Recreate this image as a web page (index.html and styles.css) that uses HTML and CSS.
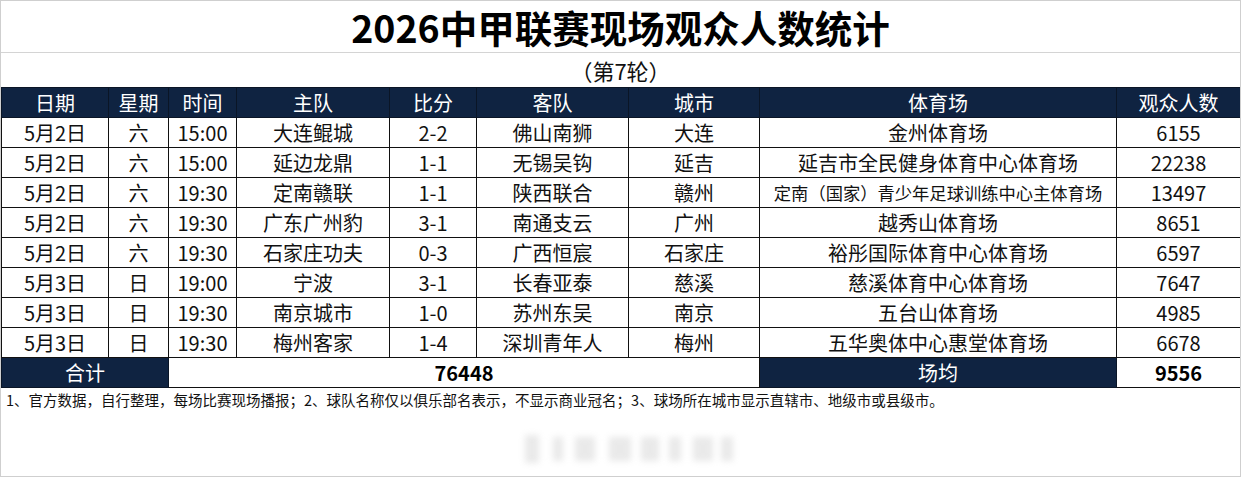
FILE: index.html
```html
<!DOCTYPE html>
<html lang="zh-CN">
<head>
<meta charset="utf-8">
<title>2026中甲联赛现场观众人数统计</title>
<link rel="stylesheet" href="styles.css">
</head>
<body>
<div class="sheet">
  <div class="title">2026中甲联赛现场观众人数统计</div>
  <div class="subtitle">（第7轮）</div>
  <table class="stats">
    <colgroup>
      <col class="c1"><col class="c2"><col class="c3"><col class="c4"><col class="c5"><col class="c6"><col class="c7"><col class="c8"><col class="c9">
    </colgroup>
    <thead>
      <tr><th>日期</th><th>星期</th><th>时间</th><th>主队</th><th>比分</th><th>客队</th><th>城市</th><th>体育场</th><th>观众人数</th></tr>
    </thead>
    <tbody>
      <tr><td>5月2日</td><td>六</td><td>15:00</td><td>大连鲲城</td><td>2-2</td><td>佛山南狮</td><td>大连</td><td>金州体育场</td><td>6155</td></tr>
      <tr><td>5月2日</td><td>六</td><td>15:00</td><td>延边龙鼎</td><td>1-1</td><td>无锡吴钩</td><td>延吉</td><td>延吉市全民健身体育中心体育场</td><td>22238</td></tr>
      <tr><td>5月2日</td><td>六</td><td>19:30</td><td>定南赣联</td><td>1-1</td><td>陕西联合</td><td>赣州</td><td class="small">定南（国家）青少年足球训练中心主体育场</td><td>13497</td></tr>
      <tr><td>5月2日</td><td>六</td><td>19:30</td><td>广东广州豹</td><td>3-1</td><td>南通支云</td><td>广州</td><td>越秀山体育场</td><td>8651</td></tr>
      <tr><td>5月2日</td><td>六</td><td>19:30</td><td>石家庄功夫</td><td>0-3</td><td>广西恒宸</td><td>石家庄</td><td>裕彤国际体育中心体育场</td><td>6597</td></tr>
      <tr><td>5月3日</td><td>日</td><td>19:00</td><td>宁波</td><td>3-1</td><td>长春亚泰</td><td>慈溪</td><td>慈溪体育中心体育场</td><td>7647</td></tr>
      <tr><td>5月3日</td><td>日</td><td>19:30</td><td>南京城市</td><td>1-0</td><td>苏州东吴</td><td>南京</td><td>五台山体育场</td><td>4985</td></tr>
      <tr><td>5月3日</td><td>日</td><td>19:30</td><td>梅州客家</td><td>1-4</td><td>深圳青年人</td><td>梅州</td><td>五华奥体中心惠堂体育场</td><td>6678</td></tr>
    </tbody>
    <tfoot>
      <tr><th colspan="2">合计</th><td colspan="5" class="sum">76448</td><th>场均</th><td class="sum">9556</td></tr>
    </tfoot>
  </table>
  <p class="note">1、官方数据，自行整理，每场比赛现场播报；2、球队名称仅以俱乐部名表示，不显示商业冠名；3、球场所在城市显示直辖市、地级市或县级市。</p>
  <div class="watermark" aria-hidden="true">
    <span class="wm w1"></span><span class="wm w2"></span><span class="wm w3"></span><span class="wm w4"></span><span class="wm w5"></span><span class="wm w6"></span><span class="wm w7"></span><span class="wm w8"></span>
  </div>
</div>
</body>
</html>
```

FILE: styles.css
```css
html, body {
  margin: 0;
  padding: 0;
  background: #ffffff;
}

body {
  font-family: "Noto Sans CJK SC", "Noto Sans", sans-serif;
  color: #111111;
}

.sheet {
  position: relative;
  box-sizing: border-box;
  width: 1241px;
  height: 477px;
  border: 1px solid #cfcfcf;
  overflow: hidden;
}

.title {
  height: 51px;
  border-bottom: 1px solid #d4d4d4;
  display: flex;
  align-items: center;
  justify-content: center;
  font-size: 37.5px;
  font-weight: 700;
  color: #000;
  line-height: 1;
}

.subtitle {
  height: 34px;
  display: flex;
  align-items: center;
  justify-content: center;
  font-size: 22px;
  line-height: 1;
}

.stats {
  border-collapse: collapse;
  table-layout: fixed;
  width: 1239px;
}

.c1 { width: 107px; }
.c2 { width: 60px; }
.c3 { width: 68px; }
.c4 { width: 153px; }
.c5 { width: 87px; }
.c6 { width: 152px; }
.c7 { width: 131px; }
.c8 { width: 357px; }
.c9 { width: 124px; }

.stats th,
.stats td {
  height: 29px;
  padding: 0;
  border: 1px solid #111;
  text-align: center;
  vertical-align: middle;
  font-size: 20px;
  line-height: 29px;
  white-space: nowrap;
  overflow: hidden;
}

.stats th {
  background: #0f2341;
  color: #ffffff;
  font-weight: 400;
  border-color: #0a1526;
}

.stats td.small {
  font-size: 17.3px;
}

.stats td.sum {
  font-weight: 700;
  color: #000;
}

.note {
  margin: 0;
  padding: 2px 0 0 5px;
  font-size: 14.5px;
  line-height: 20px;
  white-space: nowrap;
}

.watermark {
  position: absolute;
  left: 524px;
  top: 432px;
  width: 210px;
  height: 32px;
  filter: blur(3px);
  opacity: 0.3;
}

.wm {
  position: absolute;
  top: 4px;
  height: 24px;
  background: #b8b8b8;
}

.w1 { left: 0; width: 14px; top: 2px; height: 28px; }
.w2 { left: 28px; width: 10px; }
.w3 { left: 50px; width: 20px; }
.w4 { left: 84px; width: 22px; }
.w5 { left: 116px; width: 18px; }
.w6 { left: 144px; width: 12px; }
.w7 { left: 168px; width: 20px; }
.w8 { left: 196px; width: 12px; }
```
